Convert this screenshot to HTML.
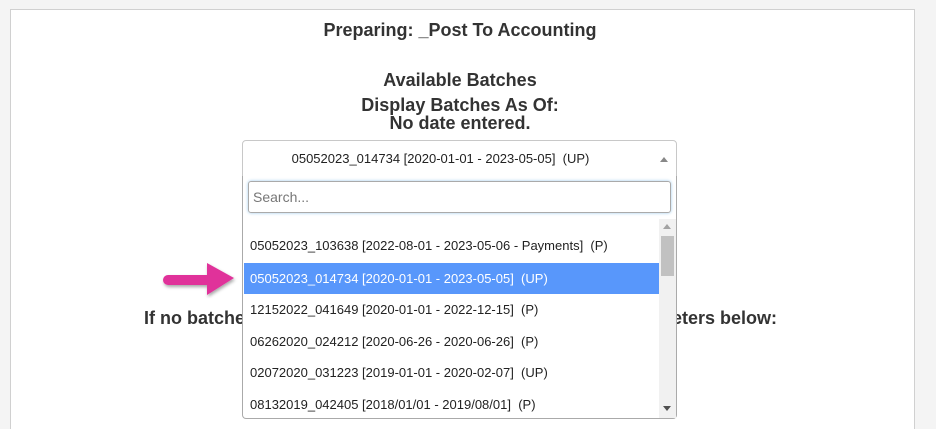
<!DOCTYPE html>
<html><head><style>
html,body{margin:0;width:936px;height:429px;overflow:hidden}
body{background:#f4f4f4;font-family:"Liberation Sans",Arial,sans-serif;position:relative;color:#333}
.panel{position:absolute;left:10px;top:9px;width:903px;height:430px;background:#fff;border:1px solid #d0d0d0}
.t{position:absolute;left:-2px;width:924px;text-align:center;font-weight:bold;font-size:18px;white-space:nowrap}
.sel{position:absolute;left:242px;top:140px;width:395px;padding-right:38px;height:35px;border:1px solid #c8c8c8;border-radius:4px 4px 0 0;background:#fff;font-size:13px;color:#222;line-height:35px;text-align:center}
.drop{position:absolute;left:242px;top:176px;width:433px;height:242px;border:1px solid #aaa;border-top:none;background:#fff;border-radius:0 0 4px 4px}
.search{position:absolute;left:5px;top:5px;width:423px;height:32px;box-sizing:border-box;border:1px solid #aaa;border-radius:3px;box-shadow:0 0 3px #9ecaed;font-size:14px;color:#777;line-height:30px;padding-left:4px}
.opt{position:absolute;left:1px;width:415px;height:31px;line-height:31px;font-size:13px;padding-left:6px;box-sizing:border-box;color:#222;white-space:nowrap}
.hl{background:#5897fb;color:#fff}
.sb{position:absolute;left:416px;top:43px;width:17px;height:199px;background:#f1f1f1}
</style></head><body>
<div class="panel"></div>
<div class="t" style="top:20px">Preparing: _Post To Accounting</div>
<div class="t" style="top:70px">Available Batches</div>
<div class="t" style="top:95px">Display Batches As Of:</div>
<div class="t" style="top:113px">No date entered.</div>
<div class="t" style="top:308px;left:144px;width:200px;text-align:left">If no batches are</div>
<div class="t" style="top:308px;left:577px;width:200px;text-align:right">parameters below:</div>
<svg style="position:absolute;left:155px;top:255px" width="90" height="50">
<defs><filter id="s"><feDropShadow dx="1" dy="2" stdDeviation="1.5" flood-color="#000" flood-opacity="0.35"/></filter></defs>
<g filter="url(#s)" fill="#e0309a"><path d="M13 20 H52 V8 L79 23 L52 40 V30 H13 A5 5 0 0 1 13 20Z"/></g>
</svg>
<div class="sel">05052023_014734 [2020-01-01 - 2023-05-05]&nbsp; (UP)
<svg style="position:absolute;right:8px;top:15px" width="8" height="6"><path d="M0 6 L4 1 L8 6Z" fill="#888"/></svg></div>
<div class="drop">
<div class="search">Search...</div>
<div class="opt" style="top:54px">05052023_103638 [2022-08-01 - 2023-05-06 - Payments]&nbsp; (P)</div>
<div class="opt hl" style="top:87px">05052023_014734 [2020-01-01 - 2023-05-05]&nbsp; (UP)</div>
<div class="opt" style="top:118px">12152022_041649 [2020-01-01 - 2022-12-15]&nbsp; (P)</div>
<div class="opt" style="top:150px">06262020_024212 [2020-06-26 - 2020-06-26]&nbsp; (P)</div>
<div class="opt" style="top:181px">02072020_031223 [2019-01-01 - 2020-02-07]&nbsp; (UP)</div>
<div class="opt" style="top:213px;height:29px">08132019_042405 [2018/01/01 - 2019/08/01]&nbsp; (P)</div>
<div class="sb">
<svg style="position:absolute;left:4px;top:5px" width="8" height="5"><path d="M0 5 L4 0 L8 5Z" fill="#a3a3a3"/></svg>
<div style="position:absolute;left:2px;top:17px;width:13px;height:40px;background:#c1c1c1"></div>
<svg style="position:absolute;left:4px;top:187px" width="8" height="5"><path d="M0 0 L4 5 L8 0Z" fill="#505050"/></svg>
</div>
</div>
</body></html>
